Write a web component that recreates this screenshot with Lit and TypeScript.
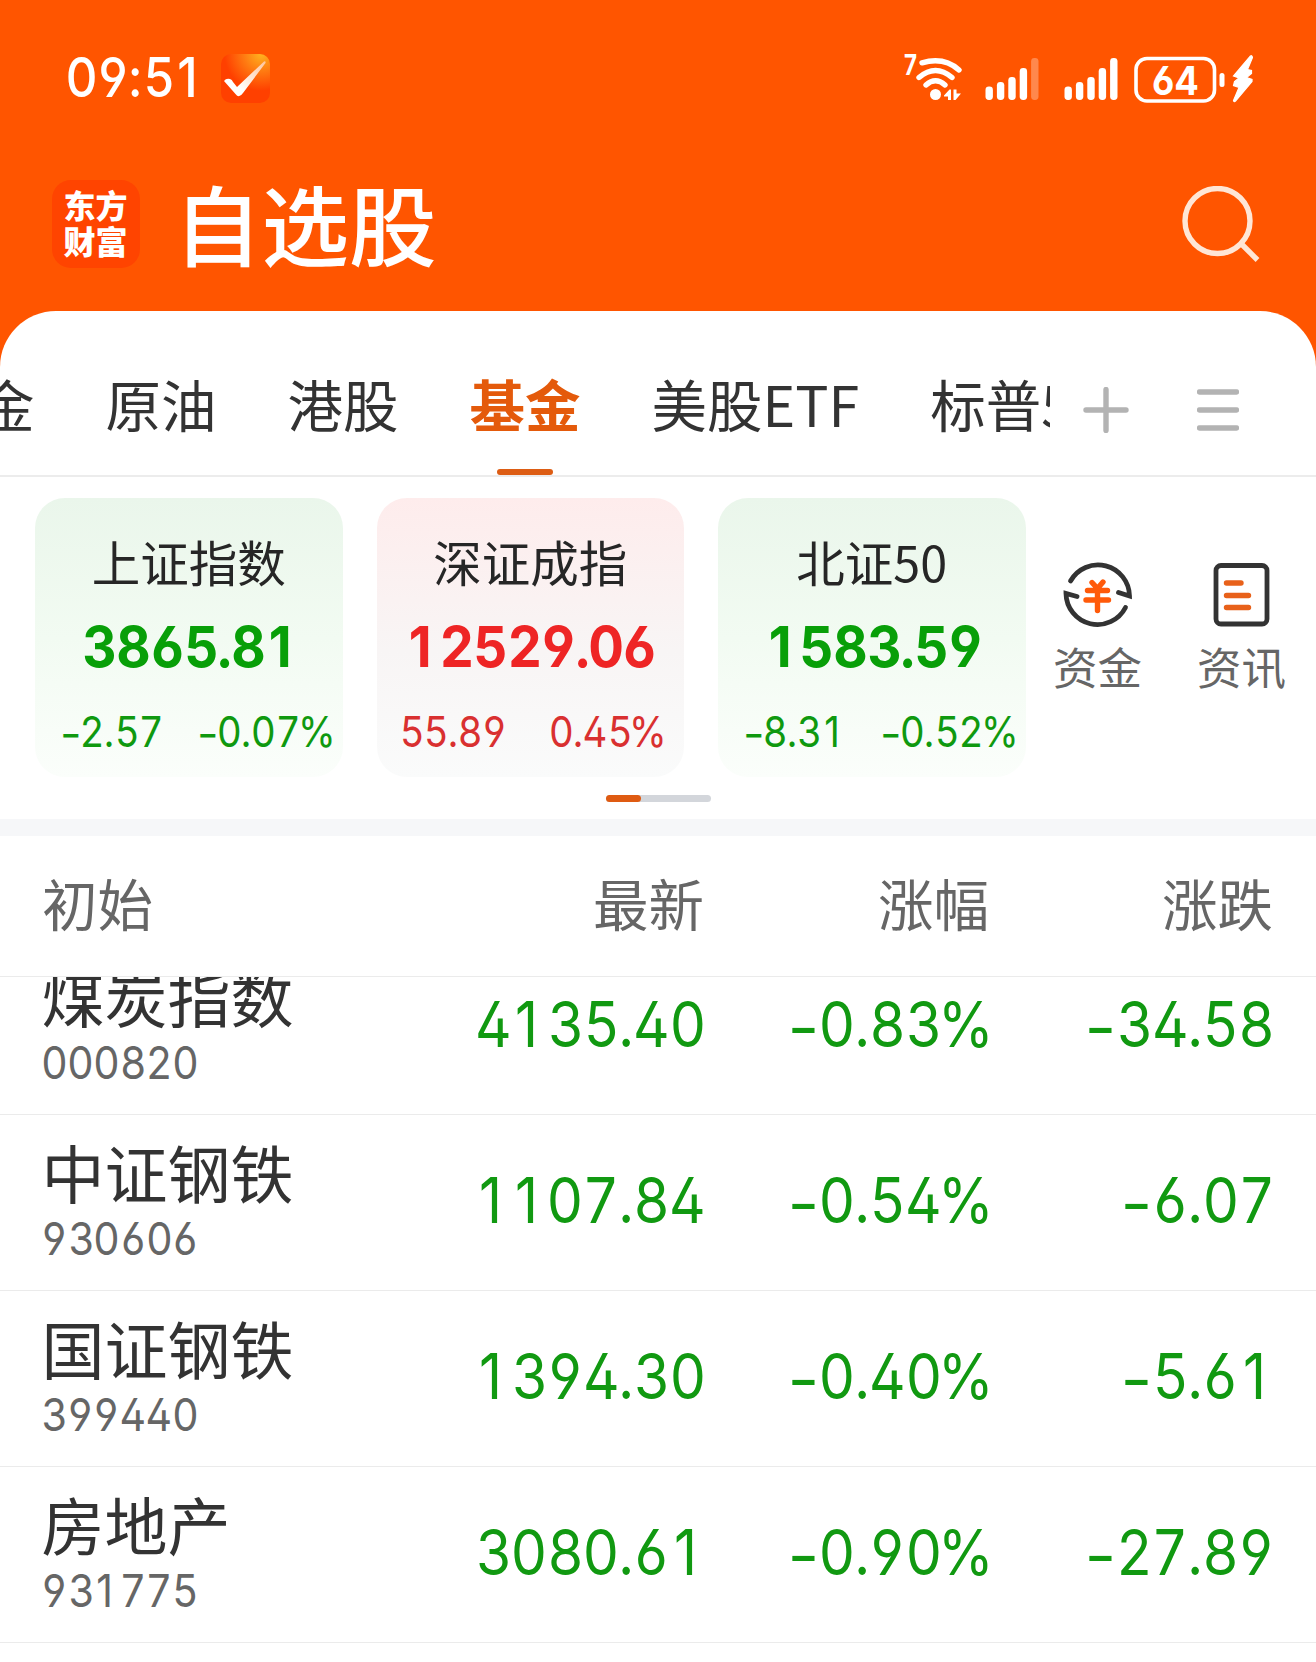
import { LitElement, html, svg, css } from "lit";
import { customElement, property } from "lit/decorators.js";
import { classMap } from "lit/directives/class-map.js";

interface IndexCard { name: string; value: string; diff: string; pct: string; up: boolean; }
interface Quote { name: string; code: string; last: string; pct: string; diff: string; }

const TABS = ["黄金", "原油", "港股", "基金", "美股ETF", "标普500"];
const ACTIVE_TAB = "基金";

const INDEXES: IndexCard[] = [
  { name: "上证指数", value: "3865.81", diff: "-2.57", pct: "-0.07%", up: false },
  { name: "深证成指", value: "12529.06", diff: "55.89", pct: "0.45%", up: true },
  { name: "北证50", value: "1583.59", diff: "-8.31", pct: "-0.52%", up: false },
];

const QUOTES: Quote[] = [
  { name: "煤炭指数", code: "000820", last: "4135.40", pct: "-0.83%", diff: "-34.58" },
  { name: "中证钢铁", code: "930606", last: "1107.84", pct: "-0.54%", diff: "-6.07" },
  { name: "国证钢铁", code: "399440", last: "1394.30", pct: "-0.40%", diff: "-5.61" },
  { name: "房地产", code: "931775", last: "3080.61", pct: "-0.90%", diff: "-27.89" },
];

const CELL_CLASS: Record<string, string> = { ".": "dot", ":": "colon", "-": "dash", "%": "pct", "1": "one" };

/** A figure set in fixed-width cells, so that digits line up between rows. */
@customElement("fixed-figure")
class FixedFigure extends LitElement {
  @property() value = "";
  static styles = css`
    :host { display: inline-flex; font-family: Inter, sans-serif; font-feature-settings: "cv02", "cv03", "cv04"; white-space: nowrap; }
    .c { display: flex; justify-content: center; flex: none; width: var(--digit, 0.571em); }
    .g { flex: none; transform: scaleX(var(--squeeze, 0.9)); }
    .dot { width: 0.23em; }
    .colon { width: 0.27em; }
    .dash { width: var(--dash, 0.502em); }
    .dash .g { transform: translateY(0.04em) scaleX(1.1); }
    .pct { width: 0.778em; }
    .one .g { transform: translateX(-0.035em) scaleX(var(--squeeze, 0.9)); }
  `;
  render() {
    return html`${[...this.value].map(ch => html`<span class="c ${CELL_CLASS[ch] ?? ""}"><span class="g">${ch}</span></span>`)}`;
  }
}

@customElement("status-bar")
class StatusBar extends LitElement {
  static styles = css`
    :host { display: flex; height: 156px; padding: 0 62px 0 66px; box-sizing: border-box; color: #fff; }
    .left, .right { display: flex; align-items: center; height: 156px; }
    .right { margin-left: auto; height: 160px; }
    .time { font-size: 54.500px; font-weight: 500; line-height: 60px; width: 155px; }
    svg { display: block; }
    .wifi { margin-right: 22px; }
    .sig { margin-right: 25px; }
    .sig2 { margin-right: 16px; }
    .bat { margin-right: 6px; }
    .seven { font: 700 28px Inter, sans-serif; fill: #fff; }
    .level { font: 700 40px Inter, sans-serif; fill: #fff; font-feature-settings: "cv03"; }
  `;

  private signal(cls: string, dim: boolean) {
    const tops = [36.5, 32, 27, 18, 8];
    return html`<svg class=${cls} width="54" height="60" viewBox="0 0 54 60">
      ${tops.map((t, i) => svg`<rect x=${0.5 + i * 11.4} y=${t} width="7.4" height=${50 - t} rx="3.4" fill="#fff" opacity=${dim && i === 4 ? 0.3 : 1}></rect>`)}
    </svg>`;
  }

  render() {
    return html`
      <div class="left">
        <div class="time"><fixed-figure value="09:51"></fixed-figure></div>
        <svg width="49" height="49" viewBox="0 0 49 49">
          <defs>
            <radialGradient id="glow" cx="0.82" cy="0" r="0.75">
              <stop offset="0" stop-color="#ffb31f"></stop>
              <stop offset="0.45" stop-color="#ff7d12"></stop>
              <stop offset="1" stop-color="#ff4000"></stop>
            </radialGradient>
            <linearGradient id="tick" x1="0" y1="1" x2="1" y2="0">
              <stop offset="0.3" stop-color="#fff"></stop>
              <stop offset="1" stop-color="#ffc49a"></stop>
            </linearGradient>
          </defs>
          <rect width="49" height="49" rx="10" fill="url(#glow)"></rect>
          <path d="M3 27Q5 24 9 25Q11 25.500 12 28L16 33L43 7.500Q45 6.500 44.500 9L22 39Q18 45 14.500 40Z" fill="url(#tick)"></path>
        </svg>
      </div>
      <div class="right">
        <svg class="wifi" width="60" height="60" viewBox="0 0 60 60">
          <text class="seven" x="1" y="24.500" textLength="13" lengthAdjust="spacingAndGlyphs">7</text>
          <g fill="none" stroke="#fff" stroke-width="5.400">
            <path d="M19 12.800Q41 6.500 56 20" stroke-linecap="round" stroke-linejoin="round"></path>
            <path d="M16 27.500Q32.500 13.500 49 27.500" stroke-linecap="round"></path>
            <path d="M23 35Q32.500 26.500 42 35" stroke-linecap="round"></path>
          </g>
          <circle cx="32.500" cy="44.500" r="5.500" fill="#fff"></circle>
          <path d="M41 45.500L46.500 39.500H48V50H45V46.500H41ZM50.500 39.500H53.500V43.500H58L52.500 50H50.500Z" fill="#fff"></path>
        </svg>
        ${this.signal("sig", true)}
        ${this.signal("sig2", false)}
        <svg class="bat" width="92" height="60" viewBox="0 0 92 60">
          <rect x="2" y="8.500" width="78.500" height="42.500" rx="11" fill="none" stroke="#fff" stroke-width="3.600"></rect>
          <rect x="85.500" y="23" width="5" height="14" rx="2.500" fill="#fff"></rect>
          <text class="level" x="18" y="44.500" textLength="47" lengthAdjust="spacingAndGlyphs">64</text>
        </svg>
        <svg width="22" height="60" viewBox="0 0 22 60">
          <path d="M18.500 6L1.500 26L7 28L2.500 31.500L1.500 35.500L7 37.500L1.500 50.500Q2 52.500 3.500 51L20 31.500V29.500L14.500 27.500L19.500 23.500V20.500L15.500 19.500L20.500 7.500Q20 5 18.500 6Z" fill="#fff" stroke="#fff" stroke-width="1.200"></path>
        </svg>
      </div>`;
  }
}

@customElement("title-bar")
class TitleBar extends LitElement {
  static styles = css`
    :host { display: flex; align-items: center; height: 136px; padding: 0 56px 0 52px; box-sizing: border-box; color: #fff; }
    .logo { width: 88px; height: 88px; border-radius: 19px; background: #ff4400; display: flex; flex-direction: column; align-items: center; justify-content: center; margin-right: 34px; box-sizing: border-box; padding: 0 1px 4px 0; }
    .logo span { font: 900 32px/36.500px "Noto Sans CJK SC", sans-serif; }
    h1 { margin: 0; font: 500 87.500px/100px "Noto Sans CJK SC", sans-serif; padding-bottom: 4px; }
    svg { display: block; margin: 2px 0 0 auto; }
  `;
  render() {
    return html`
      <div class="logo"><span>东方</span><span>财富</span></div>
      <h1>自选股</h1>
      <svg width="78" height="78" viewBox="0 0 78 78" fill="none" stroke="#ffe6d5" stroke-width="5.400">
        <circle cx="35.500" cy="35" r="32.500"></circle>
        <path d="M58.500 57L75.500 74"></path>
      </svg>`;
  }
}

@customElement("tab-strip")
class TabStrip extends LitElement {
  static styles = css`
    :host { display: flex; height: 166px; box-sizing: border-box; border-bottom: 2px solid #ececec; background: #fff; border-radius: 56px 56px 0 0; color: #333; }
    .view { width: 1050px; overflow: hidden; display: flex; }
    .tabs { display: flex; gap: 71px; margin-left: -76.500px; }
    .tab { flex: none; display: flex; flex-direction: column; align-items: center; justify-content: flex-end; font: 400 55.500px/80px "Noto Sans CJK SC", sans-serif; white-space: nowrap; }
    .tab::after { content: ""; width: 56px; height: 6px; margin-top: 26px; border-radius: 3px; background: transparent; }
    .on { color: #e45a0b; font-weight: 700; }
    .on::after { background: #dd5d14; }
    .tools { display: flex; align-items: center; gap: 68px; padding: 34px 0 0 33px; }
    svg { display: block; }
  `;
  render() {
    return html`
      <div class="view"><div class="tabs">
        ${TABS.map(t => html`<div class=${classMap({ tab: true, on: t === ACTIVE_TAB })}>${t}</div>`)}
      </div></div>
      <div class="tools">
        <svg width="46" height="46" viewBox="0 0 46 46" stroke="#b3b3b3" stroke-width="5.400" stroke-linecap="round"><path d="M23 2.500V43.500M3 23H43"></path></svg>
        <svg width="42" height="46" viewBox="0 0 42 46" stroke="#b3b3b3" stroke-width="5.400" stroke-linecap="round"><path d="M2.500 5H39.500M2.500 23H39.500M2.500 41H39.500"></path></svg>
      </div>`;
  }
}

@customElement("index-card")
class IndexCardView extends LitElement {
  @property({ attribute: false }) item!: IndexCard;
  static styles = css`
    .card { width: 307.500px; height: 279px; box-sizing: border-box; padding-top: 31px; border-radius: 30px; background: linear-gradient(#eaf6eb, #f2fbf2 50%, #fbfefb); color: #0f990f; display: flex; flex-direction: column; align-items: center; }
    .up { background: linear-gradient(#feecec, #f8f5f5 55%, #fafbfb); color: #d93030; }
    .name { font: 400 48.500px/64px "Noto Sans CJK SC", sans-serif; color: #262626; }
    .value { font-size: 57px; line-height: 60px; font-weight: 700; color: #089f08; margin: 24px 0 0 4px; --digit: 0.597em; --squeeze: 0.93; }
    .up .value { color: #ee2525; margin-left: 2px; }
    .changes { align-self: stretch; display: flex; justify-content: space-between; margin-top: 25px; padding: 0 9px 0 26px; font-size: 42.700px; line-height: 60px; --dash: 0.45em; }
    .up .changes { padding: 0 19px 0 23px; }
  `;
  render() {
    const { name, value, diff, pct, up } = this.item;
    return html`<div class=${classMap({ card: true, up })}>
      <div class="name">${name}</div>
      <fixed-figure class="value" .value=${value}></fixed-figure>
      <div class="changes"><fixed-figure .value=${diff}></fixed-figure><fixed-figure .value=${pct}></fixed-figure></div>
    </div>`;
  }
}

@customElement("index-panel")
class IndexPanel extends LitElement {
  static styles = css`
    :host { display: flex; flex-direction: column; height: 342px; box-sizing: border-box; padding-top: 21px; background: #fff; }
    .row { display: flex; padding-left: 35px; }
    .cards { display: flex; gap: 34px; }
    .link { display: flex; flex-direction: column; align-items: center; width: 90px; margin: 60px 0 0 27px; font: 400 44.500px/60px "Noto Sans CJK SC", sans-serif; color: #666; white-space: nowrap; }
    .link + .link { margin-left: 54px; }
    svg { display: block; margin-bottom: 6px; }
    .pager { width: 105px; height: 7px; margin: 18px auto 0; border-radius: 4px; background: #d3d6db; }
    .thumb { width: 35px; height: 7px; border-radius: 4px; background: #df5b12; }
  `;
  render() {
    return html`
      <div class="row">
        <div class="cards">${INDEXES.map(i => html`<index-card .item=${i}></index-card>`)}</div>
        <div class="link">
          <svg width="72" height="72" viewBox="0 0 72 72" fill="none" stroke="#333" stroke-width="4.800" stroke-linecap="round">
            <path d="M8.500 23A31.500 31.500 0 0 1 67.500 38L56.500 34.500"></path>
            <path d="M63.500 49.500A31.500 31.500 0 0 1 4 35.500L15 38.500"></path>
            <path d="M30 24.500L35.500 30.500L41 24M25.500 32.500H45.500M24 42H46.500M35.500 31V52.500" stroke="#ff5a0a" stroke-width="5.400"></path>
          </svg>资金
        </div>
        <div class="link">
          <svg width="72" height="72" viewBox="0 0 72 72" fill="none" stroke="#333" stroke-width="4.800" stroke-linecap="round">
            <rect x="10" y="7.500" width="51" height="58.500" rx="5"></rect>
            <path d="M20.500 25H35M20.500 37.500H42.500M20.500 49.500H42.500" stroke="#e8611a" stroke-width="5.400"></path>
          </svg>资讯
        </div>
      </div>
      <div class="pager"><div class="thumb"></div></div>`;
  }
}

@customElement("quote-table")
class QuoteTable extends LitElement {
  static styles = css`
    :host { display: block; border-top: 17px solid #f6f7f9; background: #fff; }
    .head, .row { display: grid; grid-template-columns: 362px 300px 285px 284px; padding-left: 42px; box-sizing: border-box; align-items: center; }
    .head { height: 141px; border-bottom: 1px solid #ebebeb; font: 400 55.500px/80px "Noto Sans CJK SC", sans-serif; color: #666; padding-bottom: 9px; }
    .head > :not(:first-child) { text-align: right; }
    .body { height: 685px; overflow: hidden; }
    .row { height: 176px; border-bottom: 1px solid #ebebeb; }
    .row:first-child { margin-top: -38px; }
    .name { font: 400 63px/66px "Noto Sans CJK SC", sans-serif; color: #333; margin: -4px 0 10px -0.500px; }
    .code { font-size: 45.700px; line-height: 50px; color: #666; margin: 0 0 -1px -0.500px; }
    .id { display: flex; flex-direction: column; align-items: flex-start; }
    .fig { font-size: 63px; line-height: 76px; color: #119911; margin: -5px -1.500px 0 0; justify-self: end; }
  `;
  render() {
    return html`
      <div class="head"><span>初始</span><span>最新</span><span>涨幅</span><span>涨跌</span></div>
      <div class="body">
        ${QUOTES.map(q => html`<div class="row">
          <div class="id"><div class="name">${q.name}</div><fixed-figure class="code" .value=${q.code}></fixed-figure></div>
          <fixed-figure class="fig" .value=${q.last}></fixed-figure>
          <fixed-figure class="fig" .value=${q.pct}></fixed-figure>
          <fixed-figure class="fig" .value=${q.diff}></fixed-figure>
        </div>`)}
      </div>`;
  }
}

@customElement("app-root")
class AppRoot extends LitElement {
  static styles = css`
    :host { display: block; width: 1316px; height: 1662px; overflow: hidden; background: #fff; }
    .top { background: #ff5500; }
    .spacer { height: 19px; }
  `;
  render() {
    return html`
      <div class="top">
        <status-bar></status-bar>
        <title-bar></title-bar>
        <div class="spacer"></div>
        <tab-strip></tab-strip>
      </div>
      <index-panel></index-panel>
      <quote-table></quote-table>`;
  }
}
